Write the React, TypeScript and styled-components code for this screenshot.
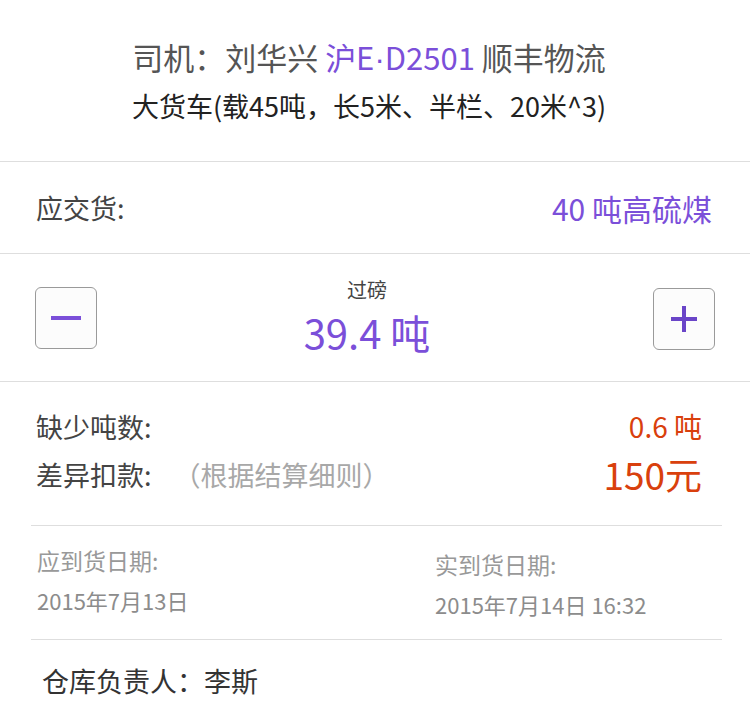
import React from "react";
import styled, { createGlobalStyle } from "styled-components";

const Global = createGlobalStyle`
  html, body { margin: 0; padding: 0; background: #fff; }
  body { font-family: "Noto Sans CJK SC", "Noto Sans", sans-serif; }
  * { box-sizing: border-box; }
`;

const PURPLE = "#7b4fd9";
const RED = "#d9400d";

const Page = styled.div`
  width: 750px;
  background: #fff;
`;

const Header = styled.header`
  height: 162px;
  border-bottom: 1px solid #dedede;
  display: flex;
  flex-direction: column;
  align-items: center;
  padding: 36px 12px 0 0;
`;

const DriverLine = styled.div`
  font-size: 31px;
  line-height: 42px;
  color: #555;
  white-space: nowrap;
`;

const Plate = styled.span`
  color: ${PURPLE};
`;

const Dot = styled.span`
  font-family: "Liberation Sans", sans-serif;
`;

const TruckLine = styled.div`
  font-size: 27px;
  line-height: 36px;
  margin-top: 7px;
  color: #222;
  white-space: nowrap;
`;

const Row = styled.div<{ $h: number }>`
  height: ${(p) => p.$h}px;
  border-bottom: 1px solid #dedede;
  display: flex;
  align-items: center;
  justify-content: space-between;
  padding: 0 38px 0 36px;
`;

const Label = styled.span<{ $size?: number; $color?: string }>`
  font-size: ${(p) => p.$size ?? 27}px;
  color: ${(p) => p.$color ?? "#444"};
  white-space: nowrap;
`;

const Value = styled.span<{ $size: number; $color: string }>`
  font-size: ${(p) => p.$size}px;
  color: ${(p) => p.$color};
  white-space: nowrap;
`;

const Stepper = styled.div`
  height: 128px;
  border-bottom: 1px solid #dedede;
  display: flex;
  align-items: center;
  justify-content: space-between;
  padding: 0 35px;
`;

const StepButton = styled.button<{ $dy?: number }>`
  width: 62px;
  height: 62px;
  border: 1px solid #9a9a9a;
  border-radius: 6px;
  background: #fcfcfc;
  display: flex;
  align-items: center;
  justify-content: center;
  padding: 0;
  margin-top: ${(p) => p.$dy ?? 0}px;
`;

const Center = styled.div`
  display: flex;
  flex-direction: column;
  align-items: center;
  margin: -2px 16px 0 0;
`;

const Small = styled.div`
  font-size: 20px;
  line-height: 28px;
  color: #444;
`;

const Weight = styled.div`
  font-size: 40px;
  line-height: 52px;
  color: ${PURPLE};
  margin-top: 2px;
`;

const Shortage = styled.section`
  margin: 0 28px 0 31px;
  padding: 24px 20px 31px 5px;
  border-bottom: 1px solid #dedede;
  display: flex;
  flex-direction: column;
  gap: 8px;
`;

const Line = styled.div`
  display: flex;
  align-items: center;
  justify-content: space-between;
  height: 40px;
`;

const Note = styled.span`
  color: #a8a8a8;
  margin-left: 22px;
`;

const Dates = styled.section`
  margin: 0 28px 0 31px;
  height: 114px;
  border-bottom: 1px solid #dedede;
  display: grid;
  grid-template-columns: 398px 1fr;
  padding: 18px 0 0 6px;
`;

const DateCol = styled.div<{ $dy?: number }>`
  display: flex;
  flex-direction: column;
  gap: 8px;
  margin-top: ${(p) => p.$dy ?? 0}px;
`;

const DateLabel = styled.div`
  font-size: 23px;
  line-height: 32px;
  color: #999;
`;

const DateValue = styled.div`
  font-size: 22px;
  line-height: 32px;
  color: #8c8c8c;
`;

const Footer = styled.div`
  padding: 21px 0 0 42px;
  font-size: 27px;
  line-height: 40px;
  color: #333;
`;

const Minus = () => (
  <svg width="30" height="30" viewBox="0 0 30 30">
    <rect x="0" y="13" width="30" height="4" fill="#7b4fd9" />
  </svg>
);

const Plus = () => (
  <svg width="30" height="30" viewBox="0 0 30 30">
    <rect x="2" y="13" width="26" height="4" fill="#6a45c8" />
    <rect x="13" y="2" width="4" height="26" fill="#6a45c8" />
  </svg>
);

export default function App() {
  return (
    <Page>
      <Global />
      <Header>
        <DriverLine>
          司机：刘华兴 <Plate>沪E<Dot>·</Dot>D2501</Plate> 顺丰物流
        </DriverLine>
        <TruckLine>大货车(载45吨，长5米、半栏、20米^3)</TruckLine>
      </Header>
      <Row $h={92}>
        <Label>应交货:</Label>
        <Value $size={30} $color={PURPLE}>40 吨高硫煤</Value>
      </Row>
      <Stepper>
        <StepButton aria-label="减少">
          <Minus />
        </StepButton>
        <Center>
          <Small>过磅</Small>
          <Weight>39.4 吨</Weight>
        </Center>
        <StepButton aria-label="增加" $dy={3}>
          <Plus />
        </StepButton>
      </Stepper>
      <Shortage>
        <Line>
          <Label>缺少吨数:</Label>
          <Value $size={28} $color={RED}>0.6 吨</Value>
        </Line>
        <Line>
          <Label>
            差异扣款:<Note>（根据结算细则）</Note>
          </Label>
          <Value $size={37} $color={RED}>150元</Value>
        </Line>
      </Shortage>
      <Dates>
        <DateCol>
          <DateLabel>应到货日期:</DateLabel>
          <DateValue>2015年7月13日</DateValue>
        </DateCol>
        <DateCol $dy={4}>
          <DateLabel>实到货日期:</DateLabel>
          <DateValue>2015年7月14日 16:32</DateValue>
        </DateCol>
      </Dates>
      <Footer>仓库负责人：李斯</Footer>
    </Page>
  );
}
